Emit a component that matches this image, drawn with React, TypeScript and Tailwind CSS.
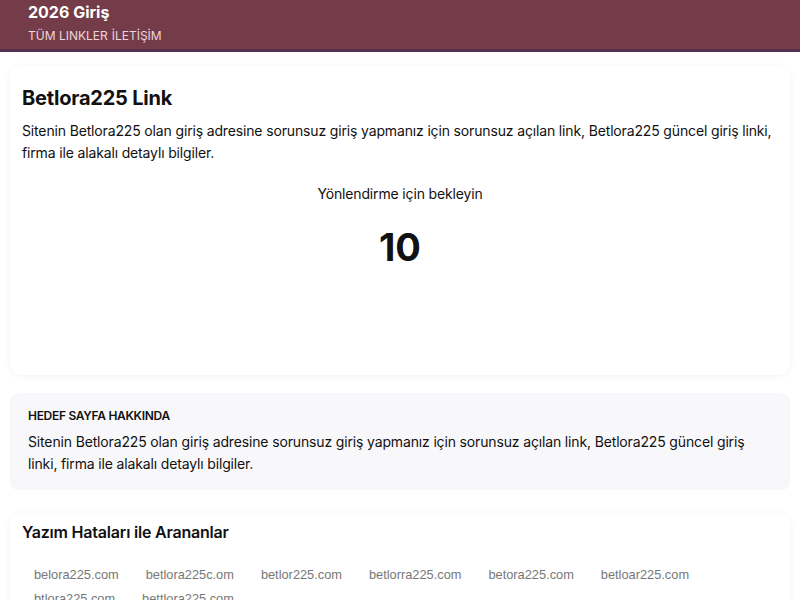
import React from "react";

const typos = [
  "belora225.com",
  "betlora225c.om",
  "betlor225.com",
  "betlorra225.com",
  "betora225.com",
  "betloar225.com",
  "btlora225.com",
  "bettlora225.com",
];

export default function App() {
  return (
    <div className="min-h-screen bg-white font-['Inter',sans-serif] text-[#111]">
      {/* Header */}
      <header className="h-[52px] bg-[#743c48] border-b-[3px] border-[#55304e] px-7 flex flex-col">
        <div className="text-white text-[16px] font-bold leading-[26px] -mt-[1px]">2026 Giriş</div>
        <nav className="flex gap-1 text-[12px] text-[#ecd6dc] leading-[20px] mt-[1px]">
          <a>TÜM LINKLER</a>
          <a>İLETİŞİM</a>
        </nav>
      </header>

      <main className="px-[10px] pt-[14px] flex flex-col">
        {/* Redirect card */}
        <section className="h-[309px] rounded-xl bg-white shadow-[0_1px_6px_rgba(0,0,0,0.06)] px-3 pt-[18px]">
          <h1 className="text-[20px] font-bold leading-[28px] tracking-[-0.2px]">Betlora225 Link</h1>
          <p className="mt-[8px] text-[14px] leading-[22px] tracking-[-0.15px]">
            Sitenin Betlora225 olan giriş adresine sorunsuz giriş yapmanız için sorunsuz açılan link, Betlora225 güncel giriş linki, firma ile alakalı detaylı bilgiler.
          </p>
          <div className="mt-[20px] text-center text-[14px] leading-[20px] tracking-[-0.15px]">Yönlendirme için bekleyin</div>
          <div className="mt-[21px] text-center text-[38px] font-bold leading-[44px]">10</div>
        </section>

        {/* About card */}
        <section className="mt-[18px] h-[97px] rounded-lg bg-[#f8f8fb] px-[18px] pt-[16px]">
          <h2 className="text-[12px] font-semibold leading-[14px] tracking-[-0.3px]">HEDEF SAYFA HAKKINDA</h2>
          <p className="mt-[8px] text-[14px] leading-[22px] tracking-[-0.15px]">
            Sitenin Betlora225 olan giriş adresine sorunsuz giriş yapmanız için sorunsuz açılan link, Betlora225 güncel giriş linki, firma ile alakalı detaylı bilgiler.
          </p>
        </section>

        {/* Typos card */}
        <section className="mt-[23px] rounded-xl bg-white shadow-[0_1px_6px_rgba(0,0,0,0.06)] px-3 pt-[7px] pb-4">
          <h2 className="text-[16px] font-semibold leading-[24px] tracking-[-0.2px]">Yazım Hataları ile Arananlar</h2>
          <div className="mt-[19px] flex flex-wrap gap-x-[3px] max-w-[700px]">
            {typos.map((t) => (
              <span key={t} className="px-3 leading-[24px] text-[12.8px] text-[#777] font-['Liberation_Sans',sans-serif]">
                {t}
              </span>
            ))}
          </div>
        </section>
      </main>
    </div>
  );
}
